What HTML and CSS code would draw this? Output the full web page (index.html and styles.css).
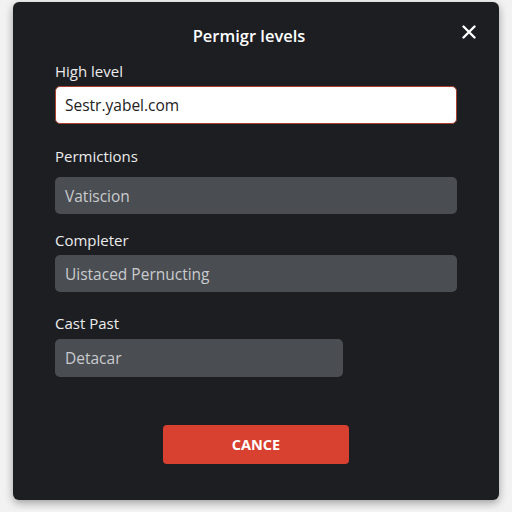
FILE: index.html
```html
<!DOCTYPE html>
<html>
<head>
<meta charset="utf-8">
<link rel="stylesheet" href="styles.css">
</head>
<body>
<div class="modal">
  <div class="header">
    <h1 class="title">Permigr levels</h1>
    <button class="close" aria-label="Close">
      <svg width="14" height="14" viewBox="0 0 14 14"><path d="M1.5 1.5 L12.5 12.5 M12.5 1.5 L1.5 12.5" stroke="#fff" stroke-width="2.4" stroke-linecap="round"/></svg>
    </button>
  </div>
  <div class="field f1">
    <div class="label">High level</div>
    <div class="input light">Sestr.yabel.com</div>
  </div>
  <div class="field f2">
    <div class="label">Permictions</div>
    <div class="input dark">Vatiscion</div>
  </div>
  <div class="field f3">
    <div class="label">Completer</div>
    <div class="input dark">Uistaced Pernucting</div>
  </div>
  <div class="field f4">
    <div class="label">Cast Past</div>
    <div class="input dark short">Detacar</div>
  </div>
  <div class="actions">
    <button class="cancel">CANCE</button>
  </div>
</div>
</body>
</html>
```
FILE: styles.css
```css
html, body {
  margin: 0;
  padding: 0;
  background: #f2f2f2;
  font-family: "Open Sans", "Noto Sans", sans-serif;
}
body {
  padding: 2px 0 0 13px;
  height: 510px;
  box-sizing: border-box;
}
.modal {
  width: 486px;
  height: 498px;
  box-sizing: border-box;
  background: #1d1e22;
  border-radius: 6px;
  box-shadow: 0 3px 8px rgba(0,0,0,0.35);
  padding: 22px 42px 0 42px;
  position: relative;
}
.header {
  display: flex;
  justify-content: center;
  align-items: center;
  height: 24px;
}
.title {
  margin: 0;
  font-size: 16.5px;
  line-height: 24px;
  font-weight: 600;
  color: #ffffff;
  margin-left: -14px;
}
.close {
  position: absolute;
  top: 23px;
  right: 23px;
  background: none;
  border: none;
  padding: 0;
  width: 14px;
  height: 14px;
  display: flex;
}
.field {
  display: flex;
  flex-direction: column;
}
.label {
  font-size: 15px;
  line-height: 20px;
  color: #ececec;
}
.f1 { margin-top: 13px; }
.f1 .label { margin-bottom: 5px; }
.f2 { margin-top: 22px; }
.f2 .label { margin-bottom: 11px; }
.f3 { margin-top: 16px; }
.f3 .label { margin-bottom: 5px; }
.f4 { margin-top: 21px; }
.f4 .label { margin-bottom: 6px; }
.input {
  height: 37px;
  box-sizing: border-box;
  border-radius: 5px;
  padding: 0 10px;
  display: flex;
  align-items: center;
  font-size: 15.5px;
}
.light {
  height: 38px;
  background: #ffffff;
  border: 1.5px solid #a8402f;
  padding-left: 9px;
  color: #222222;
}
.dark {
  background: #4a4d52;
  color: #c9cbce;
}
.short {
  width: 288px;
  height: 38px;
}
.actions {
  display: flex;
  justify-content: center;
  margin-top: 48px;
}
.cancel {
  width: 186px;
  height: 39px;
  background: #d84030;
  border: none;
  border-radius: 4px;
  color: #ffffff;
  font-family: "Open Sans", "Noto Sans", sans-serif;
  font-size: 14.5px;
  font-weight: 700;
}
```
